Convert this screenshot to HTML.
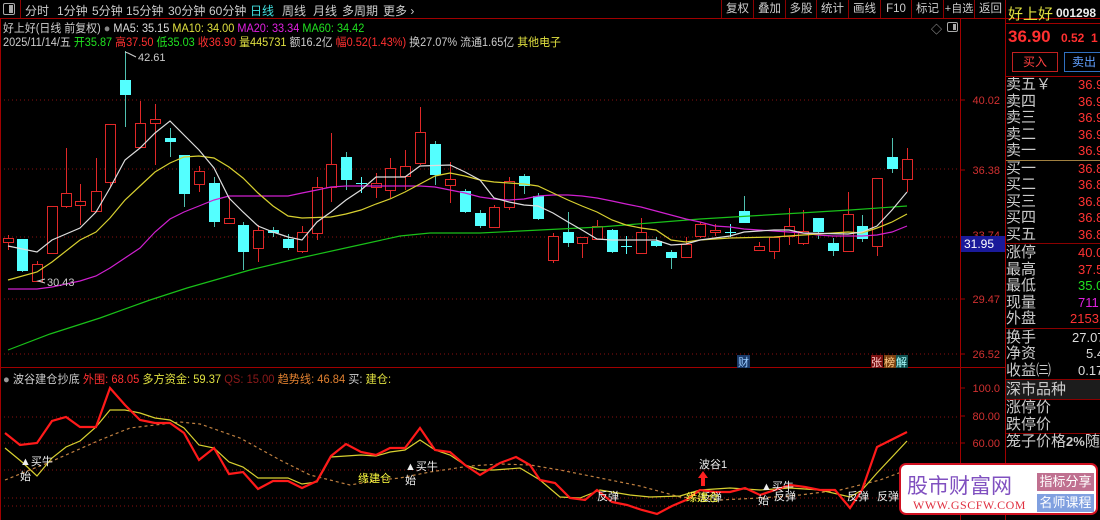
<!DOCTYPE html>
<html><head><meta charset="utf-8">
<style>
*{margin:0;padding:0;box-sizing:border-box}
html,body{width:1100px;height:520px;background:#000;overflow:hidden}
body{font-family:"Liberation Sans","WenQuanYi Zen Hei","Noto Sans CJK SC",sans-serif;color:#ccc;position:relative}
.a{position:absolute;white-space:nowrap}
.tb{position:absolute;top:0;height:18px;border-left:1px solid #8b0000;color:#ccc;font-size:11.5px;line-height:18px;text-align:center;white-space:nowrap;overflow:hidden}
.tab{position:absolute;top:2px;font-size:12px;white-space:nowrap}
.rp{position:absolute;left:1006px;width:94px;font-size:15px;line-height:16.5px;overflow:hidden}
.row{height:16.5px;position:relative;white-space:nowrap}
.row span{position:absolute;left:72px;color:#ff3333;font-size:13px}
.sep{border-top:1px solid #8b0000}
</style></head><body>
<svg id="s" width="1100" height="520" style="position:absolute;left:0;top:0" font-family="Liberation Sans, WenQuanYi Zen Hei, sans-serif">
<line x1="0" y1="18.5" x2="1100" y2="18.5" stroke="#a00000"/>
<line x1="0.5" y1="18" x2="0.5" y2="520" stroke="#a00000"/>
<line x1="960.5" y1="18" x2="960.5" y2="520" stroke="#a00000"/>
<line x1="1005.5" y1="0" x2="1005.5" y2="520" stroke="#a00000"/>
<line x1="0" y1="367.5" x2="1006" y2="367.5" stroke="#a00000"/>
<g stroke="#8a1010" stroke-dasharray="1,3">
<line x1="0" y1="100" x2="960" y2="100"/><line x1="0" y1="169" x2="960" y2="169"/><line x1="0" y1="237" x2="960" y2="237"/><line x1="0" y1="299" x2="960" y2="299"/><line x1="0" y1="354" x2="960" y2="354"/>
<line x1="0" y1="417" x2="960" y2="417"/><line x1="0" y1="443" x2="960" y2="443"/><line x1="0" y1="470" x2="960" y2="470"/><line x1="0" y1="498" x2="960" y2="498"/><line x1="0" y1="506" x2="960" y2="506"/>
</g>
<g fill="#d03030" font-size="11" text-anchor="end">
<text x="1000" y="104">40.02</text><text x="1000" y="174">36.38</text><text x="1000" y="239">33.74</text><text x="1000" y="303">29.47</text><text x="1000" y="358">26.52</text>
<text x="1000" y="392">100.0</text><text x="1000" y="420">80.00</text><text x="1000" y="447">60.00</text>
</g>
<g stroke="#a00000"><line x1="961" y1="100" x2="965" y2="100"/><line x1="961" y1="170" x2="965" y2="170"/><line x1="961" y1="299" x2="965" y2="299"/><line x1="961" y1="354" x2="965" y2="354"/><line x1="961" y1="388" x2="965" y2="388"/><line x1="961" y1="416" x2="965" y2="416"/><line x1="961" y1="443" x2="965" y2="443"/></g>
<rect x="961" y="236" width="44" height="16" fill="#1a1a9a"/>
<text x="964" y="248" fill="#fff" font-size="12">31.95</text>
<g id="cd"></g>
<polyline fill="none" stroke="#19c019" stroke-width="1.2" points="8,350 50,334 100,318 150,300 187,288 250,270 300,258 350,247 400,236 430,233 480,233 540,230 600,227 650,223 700,219 750,216 800,213 850,210 907,206"/>
<polyline fill="none" stroke="#d020d0" stroke-width="1.2" points="8,289 37,289 52,287 80,281 96,276 110,268 125,258 140,248 155,232 170,219 184,212 199,206 214,200 229,196 243,196 288,196 302,193 317,190 331,187 346,186 420,186 435,187 450,190 465,193 480,197 494,199 509,200 524,199 538,196 553,195 568,195 582,196 597,198 612,201 626,204 641,207 656,211 671,215 686,219 700,222 715,226 730,227 744,229 759,230 774,231 789,232 803,233 818,235 833,236 862,236 877,235 892,232 907,226"/>
<polyline fill="none" stroke="#d8d030" stroke-width="1.2" points="8,280 37,272 52,262 80,240 96,232 110,218 125,200 140,186 155,172 170,163 184,157 199,156 214,158 229,167 243,178 258,193 273,206 288,216 302,218 331,217 346,214 361,210 376,204 390,199 405,192 420,184 435,176 450,173 465,176 480,180 494,182 509,183 524,184 538,186 553,193 568,200 582,206 597,212 612,220 626,225 641,228 656,230 671,240 686,242 700,240 730,238 774,237 803,235 833,233 848,232 862,233 877,228 892,222 907,214"/>
<polyline fill="none" stroke="#ddd" stroke-width="1.2" points="8,246 37,252 52,240 80,228 96,212 110,188 125,160 140,148 155,133 170,121 184,135 199,150 214,168 229,198 243,212 258,226 273,232 288,237 302,240 317,222 331,212 346,200 361,190 376,177 405,177 420,166 450,165 465,172 480,180 494,198 509,202 524,205 538,206 553,213 568,222 582,230 597,239 612,240 656,240 671,245 686,244 700,240 715,238 730,236 744,232 774,230 789,230 803,233 848,234 862,232 877,226 892,210 907,192"/>
<polyline fill="none" stroke="#ccc" points="136,57 128,53 125,52"/><text x="138" y="61" fill="#ccc" font-size="11">42.61</text>
<polyline fill="none" stroke="#ccc" points="45,283 38,281 45,279"/><text x="47" y="286" fill="#ccc" font-size="11">30.43</text>
<rect x="737" y="355" width="13" height="13" fill="#1a3a6a"/><text x="738" y="366" fill="#9cf" font-size="11">财</text>
<rect x="871" y="355" width="12" height="13" fill="#7a1010"/><text x="871" y="366" fill="#fcc" font-size="11">张</text>
<rect x="884" y="355" width="12" height="13" fill="#7a4010"/><text x="884" y="366" fill="#fc8" font-size="11">榜</text>
<rect x="896" y="355" width="12" height="13" fill="#105050"/><text x="896" y="366" fill="#aff" font-size="11">解</text>
<polyline fill="none" stroke="#c08040" stroke-width="1.2" stroke-dasharray="3,3" points="5,480 50,462 100,440 130,428 180,422 200,424 240,438 280,460 310,475 350,485 380,480 400,478 430,472 470,466 500,464 530,465 560,470 600,478 640,486 680,497 720,500 760,498 800,495 840,490 880,480 907,470"/>
<polyline fill="none" stroke="#d8d030" stroke-width="1.2" points="5,448 22,462 37,476 52,458 66,447 80,441 96,427 110,410 125,410 140,413 155,418 170,420 184,428 199,445 214,448 229,462 243,467 258,478 273,478 288,478 302,484 317,482 331,457 346,456 361,455 376,456 390,452 405,450 420,440 435,450 450,455 465,465 480,470 494,470 520,468 540,480 560,497 580,498 600,490 630,495 650,497 680,496 700,490 730,488 760,490 790,488 820,490 850,497 862,490 877,473 907,441"/>
<polyline fill="none" stroke="#ff1a1a" stroke-width="2.2" points="5,433 20,445 37,443 52,421 66,417 80,427 96,427 110,388 125,405 140,420 155,423 170,423 184,433 199,460 214,448 229,474 243,472 258,489 273,481 288,481 302,488 317,481 331,456 346,444 361,452 376,455 390,448 405,448 420,428 435,450 450,452 465,465 480,475 500,463 516,457 530,465 540,480 555,483 570,498 585,500 597,490 612,502 627,505 642,510 657,514 672,506 686,500 700,490 715,492 730,492 745,488 760,495 775,490 790,485 805,487 820,490 835,490 850,508 862,490 877,447 907,432"/>
<polygon points="703,471 698,478 701,478 701,486 705,486 705,478 708,478" fill="#ff2020"/>
<g font-size="11" fill="#eee">
<text x="20" y="465">▲买牛</text><text x="20" y="480">始</text>
<text x="405" y="470">▲买牛</text><text x="405" y="484">始</text>
<text x="597" y="500">反弹</text>
<text x="699" y="468">波谷1</text>
<text x="700" y="501">反弹</text>
<text x="761" y="490">▲买牛</text><text x="758" y="504">始</text><text x="774" y="500">反弹</text>
<text x="847" y="500">反弹</text><text x="877" y="500">反弹</text>
</g>
<g font-size="11" fill="#ffff40"><text x="358" y="482">缘建仓</text><text x="686" y="501">缘建仓</text></g>
</svg>

<div class="a" style="left:3px;top:3px;width:12px;height:12px;border:1px solid #aaa;border-radius:2px"><div style="position:absolute;right:1px;top:1px;width:4px;height:8px;background:#aaa"></div></div>
<div class="a" style="left:20px;top:0;height:18px;border-left:1px solid #8b0000"></div>
<div class="tab" style="left:25px">分时</div>
<div class="tab" style="left:57px">1分钟</div>
<div class="tab" style="left:92px">5分钟</div>
<div class="tab" style="left:126px">15分钟</div>
<div class="tab" style="left:168px">30分钟</div>
<div class="tab" style="left:209px">60分钟</div>
<div class="tab" style="left:250px;color:#40e0e0">日线</div>
<div class="tab" style="left:282px">周线</div>
<div class="tab" style="left:313px">月线</div>
<div class="tab" style="left:342px">多周期</div>
<div class="tab" style="left:383px">更多 ›</div>
<div class="tb" style="left:721px;width:32px">复权</div>
<div class="tb" style="left:753px;width:32px">叠加</div>
<div class="tb" style="left:785px;width:31px">多股</div>
<div class="tb" style="left:816px;width:32px">统计</div>
<div class="tb" style="left:848px;width:32px">画线</div>
<div class="tb" style="left:880px;width:31px">F10</div>
<div class="tb" style="left:911px;width:32px">标记</div>
<div class="tb" style="left:943px;width:31px;font-size:11px">+自选</div>
<div class="tb" style="left:974px;width:32px">返回</div>
<div class="a" style="left:931px;top:21px;font-size:11px;color:#aaa">◇</div>
<div class="a" style="left:947px;top:22px;width:11px;height:10px;border:1px solid #aaa;border-radius:2px"><div style="position:absolute;right:1px;top:1px;width:3px;height:6px;background:#aaa"></div></div>

<div class="a" style="left:3px;top:20px;font-size:11.5px;transform:scaleX(0.95);transform-origin:0 0">好上好(日线 前复权) <span style="color:#888">●</span> <span style="color:#ddd">MA5: 35.15</span> <span style="color:#e0e040">MA10: 34.00</span> <span style="color:#e020e0">MA20: 33.34</span> <span style="color:#20e020">MA60: 34.42</span></div>
<div class="a" style="left:3px;top:34px;font-size:11.5px;transform:scaleX(0.95);transform-origin:0 0">2025/11/14/五 <span style="color:#20e020">开35.87</span> <span style="color:#ff3030">高37.50</span> <span style="color:#20e020">低35.03</span> <span style="color:#ff3030">收36.90</span> <span style="color:#e0e040">量445731</span> 额16.2亿 <span style="color:#ff3030">幅0.52(1.43%)</span> 换27.07% 流通1.65亿 <span style="color:#e0e040">其他电子</span></div>
<div class="a" style="left:3px;top:371px;font-size:11.5px;transform:scaleX(0.97);transform-origin:0 0"><span style="color:#999">●</span> 波谷建仓抄底 <span style="color:#ff3030">外围: 68.05</span> <span style="color:#e0e040">多方资金: 59.37</span> <span style="color:#8b1a1a">QS: 15.00</span> <span style="color:#e08030">趋势线: 46.84</span> 买: <span style="color:#e0e040">建仓:</span></div>

<div class="a" style="left:1008px;top:3px;font-size:15px;color:#e0e040">好上好</div>
<div class="a" style="left:1056px;top:6px;font-size:12px;color:#eee;font-weight:bold">001298</div>
<div class="a" style="left:1006px;top:23px;width:94px;border-top:1px solid #a00000"></div>
<div class="a" style="left:1008px;top:27px;font-size:17px;color:#ff3030;font-weight:bold">36.90</div>
<div class="a" style="left:1061px;top:31px;font-size:12px;color:#ff3030;font-weight:bold">0.52&nbsp;&nbsp;1</div>
<div class="a" style="left:1012px;top:52px;width:46px;height:20px;border:1px solid #c02020;color:#ff4040;font-size:12px;text-align:center;line-height:18px">买入</div>
<div class="a" style="left:1064px;top:52px;width:40px;height:20px;border:1px solid #3070c0;color:#60a0ff;font-size:12px;text-align:center;line-height:18px">卖出</div>
<div class="a" style="left:1006px;top:76px;width:94px;border-top:1px solid #a00000"></div>
<div class="rp" style="top:77px">
<div class="row">卖五￥<span>36.9</span></div>
<div class="row">卖四<span>36.9</span></div>
<div class="row">卖三<span>36.9</span></div>
<div class="row">卖二<span>36.9</span></div>
<div class="row">卖一<span>36.9</span></div>
<div style="border-top:1px solid #a08040;height:1px"></div>
<div class="row">买一<span>36.8</span></div>
<div class="row">买二<span>36.8</span></div>
<div class="row">买三<span>36.8</span></div>
<div class="row">买四<span>36.8</span></div>
<div class="row">买五<span>36.8</span></div>
<div class="sep" style="height:2px"></div>
<div class="row">涨停<span>40.0</span></div>
<div class="row">最高<span>37.5</span></div>
<div class="row">最低<span style="color:#20e020">35.0</span></div>
<div class="row">现量<span style="color:#e020e0">711</span></div>
<div class="row">外盘<span style="left:64px">21531</span></div>
<div class="sep" style="height:2px"></div>
<div class="row">换手<span style="left:66px;color:#ddd">27.07</span></div>
<div class="row">净资<span style="left:80px;color:#ddd">5.4</span></div>
<div class="row">收益㈢<span style="left:72px;color:#ddd">0.17</span></div>
<div class="sep"></div>
<div class="row" style="background:#1c1c1c;height:19px;line-height:19px">深市品种</div>
<div class="sep"></div>
<div class="row">涨停价</div>
<div class="row">跌停价</div>
<div class="sep"></div>
<div class="row">笼子价格<b style="font-size:13px">2%</b>随</div>
</div>

<div class="a" style="left:899px;top:463px;width:199px;height:52px;background:#fff;border:2px solid #d01020;border-radius:7px">
<div class="a" style="left:6px;top:5px;font-size:21px;color:#8050c0">股市财富网</div>
<div class="a" style="left:12px;top:33px;font-family:'Liberation Serif',serif;font-size:12px;color:#e03040;letter-spacing:0.5px">WWW.GSCFW.COM</div>
<div class="a" style="left:136px;top:8px;width:57px;height:18px;background:#c07090;color:#fff;font-size:13px;text-align:center;line-height:18px">指标分享</div>
<div class="a" style="left:136px;top:29px;width:57px;height:18px;background:#80a0e0;color:#fff;font-size:13px;text-align:center;line-height:18px">名师课程</div>
</div>

<script>
var d=[[8,238,242,235,250,'r'],[22,239,271,239,272,'c'],[37,264,281,261,282,'r'],[52,206,253,206,253,'r'],[66,193,206,148,208,'r'],[80,201,205,184,225,'r'],[96,191,211,158,211,'r'],[110,124,182,124,187,'r'],[125,80,95,51,127,'c'],[140,123,147,101,147,'r'],[155,119,123,104,165,'r'],[170,138,142,128,157,'c'],[184,155,194,155,207,'c'],[199,171,184,166,192,'r'],[214,183,222,177,227,'c'],[229,218,223,197,224,'r'],[243,225,252,222,270,'c'],[258,230,248,225,262,'r'],[273,230,233,227,237,'c'],[288,239,248,234,250,'c'],[302,232,251,226,253,'r'],[317,187,233,177,240,'r'],[331,164,187,133,202,'r'],[346,157,180,152,190,'c'],[361,183,184,177,193,'x'],[376,183,187,173,198,'r'],[390,168,190,158,198,'r'],[405,166,176,150,190,'r'],[420,132,163,107,165,'r'],[435,144,175,141,185,'c'],[450,179,185,162,203,'r'],[465,191,212,189,213,'c'],[480,213,226,210,228,'c'],[494,207,227,205,228,'r'],[509,181,207,177,210,'r'],[524,176,186,174,194,'c'],[538,196,219,193,220,'c'],[553,236,260,233,263,'r'],[568,232,243,212,247,'c'],[582,237,243,237,258,'r'],[597,226,239,220,240,'r'],[612,230,252,229,253,'c'],[626,246,246,236,254,'x'],[641,232,253,218,254,'r'],[656,241,246,237,247,'c'],[671,252,258,250,269,'c'],[686,244,257,237,258,'r'],[700,224,236,222,238,'r'],[715,230,232,224,236,'r'],[730,232,232,224,237,'x'],[744,211,223,196,223,'c'],[759,246,250,242,251,'r'],[774,237,251,237,259,'r'],[789,226,236,208,245,'r'],[803,231,243,210,245,'r'],[818,218,232,218,239,'c'],[833,243,251,238,256,'c'],[848,214,251,192,251,'r'],[862,226,239,215,242,'c'],[877,178,246,178,256,'r'],[892,157,169,138,173,'c'],[907,159,179,148,192,'r']];
var h='';
d.forEach(function(c){var x=c[0],w=11;
if(c[5]=='r'){h+='<line x1="'+(x+.5)+'" y1="'+c[3]+'" x2="'+(x+.5)+'" y2="'+c[4]+'" stroke="#e02828"/>';
h+='<rect x="'+(x-5+.5)+'" y="'+(c[1]+.5)+'" width="'+(w-1)+'" height="'+Math.max(1,c[2]-c[1])+'" fill="#000" stroke="#e02828"/>';}
else if(c[5]=='c'){h+='<line x1="'+(x+.5)+'" y1="'+c[3]+'" x2="'+(x+.5)+'" y2="'+c[4]+'" stroke="#50c0b0"/>';
h+='<rect x="'+(x-5)+'" y="'+c[1]+'" width="'+w+'" height="'+Math.max(2,c[2]-c[1])+'" fill="#54ffff"/>';}
else{h+='<line x1="'+(x+.5)+'" y1="'+c[3]+'" x2="'+(x+.5)+'" y2="'+c[4]+'" stroke="#54ffff"/><line x1="'+(x-5)+'" y1="'+(c[1]+.5)+'" x2="'+(x+6)+'" y2="'+(c[1]+.5)+'" stroke="#54ffff"/>';}
});
document.getElementById('cd').innerHTML=h;
</script>
</body></html>
